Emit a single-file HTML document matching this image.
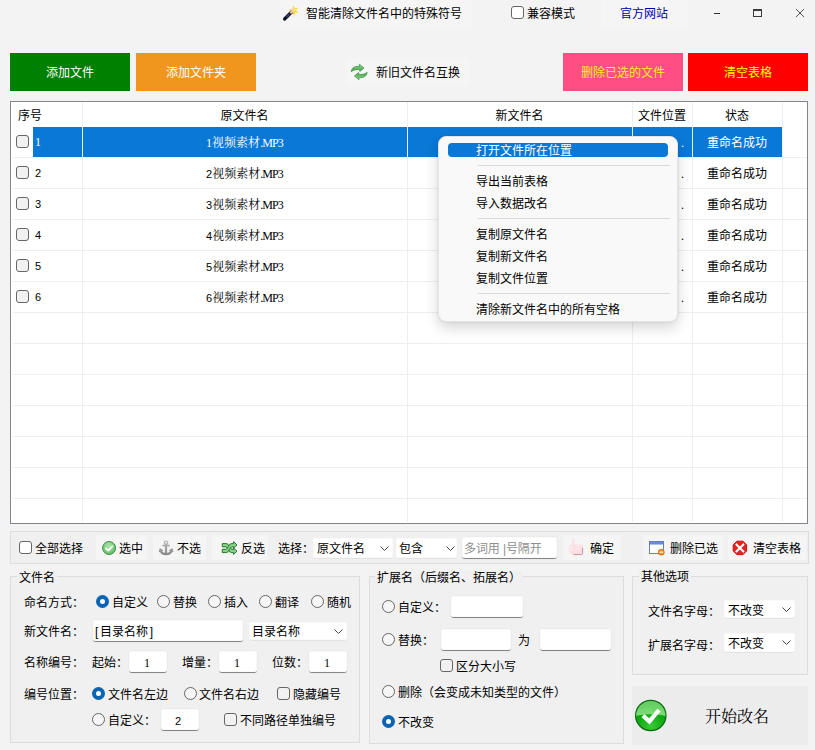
<!DOCTYPE html>
<html lang="zh-CN">
<head>
<meta charset="utf-8">
<title>文件批量改名</title>
<style>
*{box-sizing:border-box;margin:0;padding:0}
html,body{width:815px;height:750px;overflow:hidden;background:#f3f3f3}
body{position:relative;font-family:"Liberation Sans","Noto Sans CJK SC",sans-serif;font-size:12px;color:#000;line-height:1}
.a{position:absolute;white-space:nowrap}
.t{position:absolute;white-space:nowrap;height:17px;line-height:16px;padding-top:1px}
.btn{position:absolute;display:flex;align-items:center;justify-content:center;white-space:nowrap;padding-top:2px}
.lite{position:absolute;background:#f5f5f5}
.cb{position:absolute;width:13px;height:13px;border:1px solid #666;border-radius:3px;background:#f1f1f1}
.rb{position:absolute;width:13px;height:13px;border:1px solid #666;border-radius:50%;background:#f6f6f6}
.rb.on{border:4px solid #0a64b4;background:#fff}
.inp{position:absolute;background:#fff;border-bottom:1px solid #868686;border-radius:3px;box-shadow:0 0 0 1px #fafafa inset,0 0 0 1px rgba(0,0,0,0.02);line-height:21px;height:22px}
.sel{position:absolute;background:#fff;border-radius:3px;box-shadow:0 0 0 1px #fafafa inset,0 1px 0 rgba(0,0,0,0.05)}
.grp{position:absolute;border:1px solid #dcdcdc;background:#f0f0f0}
.gt{position:absolute;background:#f0f0f0;height:14px;line-height:14px;padding:0 2px;white-space:nowrap}
.serif{font-family:"Liberation Serif","Noto Serif CJK SC",serif;padding-top:0}
.dg{font-family:"Liberation Sans",sans-serif;font-size:11px}
.chev{position:absolute;width:9px;height:5px}
.vl{position:absolute;width:1px;background:#efefef;top:102px;height:420px}
.hl{position:absolute;height:1px;background:#efefef;left:13px;width:794px}
.row{position:absolute;left:0;width:815px;height:30px}
.c{position:absolute;text-align:center;height:17px;line-height:16px;white-space:nowrap;padding-top:1px}
.mi{position:absolute;left:476px;height:16px;line-height:16px;white-space:nowrap}
.sep{position:absolute;left:478px;width:192px;height:1px;background:#d9d9d9}
</style>
</head>
<body>

<!-- title bar -->
<div class="lite" style="left:280px;top:0;width:192px;height:27px"></div>
<div class="t" style="left:306px;top:5px">智能清除文件名中的特殊符号</div>
<div class="cb" style="left:511px;top:6px;background:#fff"></div>
<div class="t" style="left:527px;top:5px">兼容模式</div>
<div class="lite" style="left:601px;top:0;width:87px;height:27px"></div>
<div class="t" style="left:620px;top:5px;color:#0000a8">官方网站</div>

<!-- big buttons -->
<div class="btn" style="left:10px;top:53px;width:120px;height:38px;background:#008000;color:#fff">添加文件</div>
<div class="btn" style="left:136px;top:53px;width:120px;height:38px;background:#f0961e;color:#fff">添加文件夹</div>
<div class="lite" style="left:346px;top:59px;width:123px;height:26px"></div>
<div class="t" style="left:376px;top:64px">新旧文件名互换</div>
<div class="btn" style="left:563px;top:53px;width:120px;height:38px;background:#fe4e83;color:#ffef20">删除已选的文件</div>
<div class="btn" style="left:688px;top:53px;width:120px;height:38px;background:#ff0000;color:#ffff00">清空表格</div>

<!-- table -->
<div class="a" style="left:10px;top:101px;width:798px;height:423px;background:#fff;border:1px solid #82868c"></div>

<!-- table header -->
<div class="t" style="left:18px;top:107px">序号</div>
<div class="c" style="left:82px;width:325px;top:107px">原文件名</div>
<div class="c" style="left:407px;width:225px;top:107px">新文件名</div>
<div class="c" style="left:632px;width:60px;top:107px">文件位置</div>
<div class="c" style="left:692px;width:90px;top:107px">状态</div>
<!-- grid -->
<div class="vl" style="left:82px"></div>
<div class="vl" style="left:407px"></div>
<div class="vl" style="left:632px"></div>
<div class="vl" style="left:692px"></div>
<div class="vl" style="left:782px"></div>
<div class="hl" style="top:157px"></div>
<div class="hl" style="top:188px"></div>
<div class="hl" style="top:219px"></div>
<div class="hl" style="top:250px"></div>
<div class="hl" style="top:281px"></div>
<div class="hl" style="top:312px"></div>
<div class="hl" style="top:343px"></div>
<div class="hl" style="top:374px"></div>
<div class="hl" style="top:405px"></div>
<div class="hl" style="top:436px"></div>
<div class="hl" style="top:467px"></div>
<div class="hl" style="top:498px"></div>
<div class="a" style="left:33px;top:127px;width:749px;height:30px;background:#0a78d7"></div>
<div class="a" style="left:82px;top:127px;width:1px;height:30px;background:#e4f0fb"></div>
<div class="a" style="left:407px;top:127px;width:1px;height:30px;background:#e4f0fb"></div>
<div class="a" style="left:632px;top:127px;width:1px;height:30px;background:#e4f0fb"></div>
<div class="a" style="left:692px;top:127px;width:1px;height:30px;background:#e4f0fb"></div>
<!-- row 1 -->
<div class="cb" style="left:16px;top:135px"></div>
<div class="t serif" style="left:35px;top:134px;color:#fff;">1</div>
<div class="c serif" style="left:82px;width:325px;top:134px;color:#fff;">1视频素材<span style="letter-spacing:-0.9px">.MP3</span></div>
<div class="t serif" style="left:681px;top:135px;color:#fff;">.</div>
<div class="c" style="left:692px;width:90px;top:134px;color:#fff;">重命名成功</div>
<!-- row 2 -->
<div class="cb" style="left:16px;top:166px"></div>
<div class="t serif dg" style="left:35px;top:165px;">2</div>
<div class="c serif" style="left:82px;width:325px;top:165px;"><span class="dg">2</span>视频素材<span style="letter-spacing:-0.9px">.MP3</span></div>
<div class="t serif" style="left:681px;top:166px;">.</div>
<div class="c" style="left:692px;width:90px;top:165px;">重命名成功</div>
<!-- row 3 -->
<div class="cb" style="left:16px;top:197px"></div>
<div class="t serif dg" style="left:35px;top:196px;">3</div>
<div class="c serif" style="left:82px;width:325px;top:196px;"><span class="dg">3</span>视频素材<span style="letter-spacing:-0.9px">.MP3</span></div>
<div class="t serif" style="left:681px;top:197px;">.</div>
<div class="c" style="left:692px;width:90px;top:196px;">重命名成功</div>
<!-- row 4 -->
<div class="cb" style="left:16px;top:228px"></div>
<div class="t serif dg" style="left:35px;top:227px;">4</div>
<div class="c serif" style="left:82px;width:325px;top:227px;"><span class="dg">4</span>视频素材<span style="letter-spacing:-0.9px">.MP3</span></div>
<div class="t serif" style="left:681px;top:228px;">.</div>
<div class="c" style="left:692px;width:90px;top:227px;">重命名成功</div>
<!-- row 5 -->
<div class="cb" style="left:16px;top:259px"></div>
<div class="t serif dg" style="left:35px;top:258px;">5</div>
<div class="c serif" style="left:82px;width:325px;top:258px;"><span class="dg">5</span>视频素材<span style="letter-spacing:-0.9px">.MP3</span></div>
<div class="t serif" style="left:681px;top:259px;">.</div>
<div class="c" style="left:692px;width:90px;top:258px;">重命名成功</div>
<!-- row 6 -->
<div class="cb" style="left:16px;top:290px"></div>
<div class="t serif dg" style="left:35px;top:289px;">6</div>
<div class="c serif" style="left:82px;width:325px;top:289px;"><span class="dg">6</span>视频素材<span style="letter-spacing:-0.9px">.MP3</span></div>
<div class="t serif" style="left:681px;top:290px;">.</div>
<div class="c" style="left:692px;width:90px;top:289px;">重命名成功</div>

<!-- toolbar panel -->
<div class="a" style="left:10px;top:531px;width:799px;height:33px;border:1px solid #dddddd;background:#f0f0f0"></div>
<div class="cb" style="left:19px;top:541px;background:#fff"></div>
<div class="t" style="left:35px;top:540px">全部选择</div>
<div class="lite" style="left:96px;top:535px;width:51px;height:25px"></div>
<div class="t" style="left:119px;top:540px">选中</div>
<div class="lite" style="left:153px;top:535px;width:53px;height:25px"></div>
<div class="t" style="left:177px;top:540px">不选</div>
<div class="lite" style="left:212px;top:535px;width:56px;height:25px"></div>
<div class="t" style="left:241px;top:540px">反选</div>
<div class="t" style="left:278px;top:540px">选择：</div>
<div class="sel" style="left:313px;top:538px;width:80px;height:20px"></div>
<div class="t" style="left:317px;top:540px">原文件名</div>
<svg class="chev" style="left:380px;top:546px" viewBox="0 0 9 5"><path d="M0.5 0.5 L4.5 4.5 L8.5 0.5" fill="none" stroke="#444" stroke-width="1"/></svg>
<div class="sel" style="left:396px;top:538px;width:61px;height:20px"></div>
<div class="t" style="left:399px;top:540px">包含</div>
<svg class="chev" style="left:446px;top:546px" viewBox="0 0 9 5"><path d="M0.5 0.5 L4.5 4.5 L8.5 0.5" fill="none" stroke="#444" stroke-width="1"/></svg>
<div class="inp" style="left:462px;top:537px;width:95px;height:22px"></div>
<div class="t" style="left:464px;top:540px;color:#8e8e8e;letter-spacing:-0.1px">多词用 |号隔开</div>
<div class="lite" style="left:563px;top:535px;width:58px;height:25px"></div>
<div class="t" style="left:590px;top:540px">确定</div>
<div class="lite" style="left:643px;top:535px;width:80px;height:25px"></div>
<div class="t" style="left:670px;top:540px">删除已选</div>
<div class="lite" style="left:728px;top:535px;width:78px;height:25px"></div>
<div class="t" style="left:753px;top:540px">清空表格</div>

<!-- group: 文件名 -->
<div class="grp" style="left:10px;top:576px;width:350px;height:167px"></div>
<div class="gt" style="left:17px;top:571px">文件名</div>
<div class="t" style="left:24px;top:594px">命名方式：</div>
<div class="rb on" style="left:96px;top:595px"></div>
<div class="t" style="left:112px;top:594px">自定义</div>
<div class="rb" style="left:157px;top:595px"></div>
<div class="t" style="left:173px;top:594px">替换</div>
<div class="rb" style="left:208px;top:595px"></div>
<div class="t" style="left:224px;top:594px">插入</div>
<div class="rb" style="left:259px;top:595px"></div>
<div class="t" style="left:275px;top:594px">翻译</div>
<div class="rb" style="left:311px;top:595px"></div>
<div class="t" style="left:327px;top:594px">随机</div>

<div class="t" style="left:24px;top:623px">新文件名：</div>
<div class="inp" style="left:93px;top:620px;width:150px;height:22px"></div>
<div class="t" style="left:95px;top:623px"><span style="display:inline-block;width:5px">[</span>目录名称<span style="display:inline-block;width:5px;text-align:right">]</span></div>
<div class="sel" style="left:249px;top:622px;width:98px;height:18px"></div>
<div class="t" style="left:252px;top:623px">目录名称</div>
<svg class="chev" style="left:334px;top:629px" viewBox="0 0 9 5"><path d="M0.5 0.5 L4.5 4.5 L8.5 0.5" fill="none" stroke="#444" stroke-width="1"/></svg>
<div class="t" style="left:24px;top:654px">名称编号：</div>
<div class="t" style="left:92px;top:654px">起始：</div>
<div class="inp" style="left:129px;top:651px;width:38px;height:22px"></div>
<div class="t serif" style="left:144px;top:655px">1</div>
<div class="t" style="left:182px;top:654px">增量：</div>
<div class="inp" style="left:219px;top:651px;width:38px;height:22px"></div>
<div class="t serif" style="left:234px;top:655px">1</div>
<div class="t" style="left:272px;top:654px">位数：</div>
<div class="inp" style="left:309px;top:651px;width:38px;height:22px"></div>
<div class="t serif" style="left:324px;top:655px">1</div>

<div class="t" style="left:24px;top:686px">编号位置：</div>
<div class="rb on" style="left:92px;top:687px"></div>
<div class="t" style="left:108px;top:686px">文件名左边</div>
<div class="rb" style="left:184px;top:687px"></div>
<div class="t" style="left:199px;top:686px">文件名右边</div>
<div class="cb" style="left:277px;top:687px"></div>
<div class="t" style="left:293px;top:686px">隐藏编号</div>

<div class="rb" style="left:92px;top:713px"></div>
<div class="t" style="left:108px;top:712px">自定义：</div>
<div class="inp" style="left:161px;top:709px;width:38px;height:22px"></div>
<div class="t serif dg" style="left:175px;top:713px">2</div>
<div class="cb" style="left:224px;top:713px"></div>
<div class="t" style="left:240px;top:712px">不同路径单独编号</div>

<!-- group: 扩展名 -->
<div class="grp" style="left:369px;top:576px;width:255px;height:168px"></div>
<div class="gt" style="left:375px;top:571px">扩展名（后缀名、拓展名）</div>
<div class="rb" style="left:382px;top:600px"></div>
<div class="t" style="left:398px;top:599px">自定义：</div>
<div class="inp" style="left:451px;top:596px;width:72px;height:22px"></div>
<div class="rb" style="left:382px;top:633px"></div>
<div class="t" style="left:398px;top:632px">替换：</div>
<div class="inp" style="left:441px;top:629px;width:70px;height:22px"></div>
<div class="t" style="left:518px;top:632px">为</div>
<div class="inp" style="left:540px;top:629px;width:71px;height:22px"></div>
<div class="cb" style="left:440px;top:659px"></div>
<div class="t" style="left:456px;top:658px">区分大小写</div>
<div class="rb" style="left:382px;top:685px"></div>
<div class="t" style="left:398px;top:684px">删除（会变成未知类型的文件）</div>
<div class="rb on" style="left:382px;top:715px"></div>
<div class="t" style="left:398px;top:714px">不改变</div>

<!-- group: 其他选项 -->
<div class="grp" style="left:632px;top:576px;width:176px;height:99px"></div>
<div class="gt" style="left:639px;top:570px">其他选项</div>
<div class="t" style="left:648px;top:603px">文件名字母：</div>
<div class="sel" style="left:724px;top:600px;width:71px;height:18px"></div>
<div class="t" style="left:728px;top:602px">不改变</div>
<svg class="chev" style="left:782px;top:607px" viewBox="0 0 9 5"><path d="M0.5 0.5 L4.5 4.5 L8.5 0.5" fill="none" stroke="#444" stroke-width="1"/></svg>
<div class="t" style="left:648px;top:637px">扩展名字母：</div>
<div class="sel" style="left:724px;top:633px;width:71px;height:19px"></div>
<div class="t" style="left:728px;top:635px">不改变</div>
<svg class="chev" style="left:782px;top:640px" viewBox="0 0 9 5"><path d="M0.5 0.5 L4.5 4.5 L8.5 0.5" fill="none" stroke="#444" stroke-width="1"/></svg>
<!-- start button -->
<div class="a" style="left:632px;top:686px;width:176px;height:59px;background:#ececec"></div>
<div class="t serif" style="left:705px;top:707px;font-size:16px;height:20px;line-height:20px">开始改名</div>

<!-- icons -->
<svg class="a" style="left:280px;top:2px" width="22" height="22" viewBox="280 2 22 22">
  <polygon points="293.5,5.5 294.6,8.6 297.8,7.6 296,10.4 298.4,12.6 295.2,12.8 294.6,16 293,13.4 290,14.6 291.4,11.6 288.8,9.6 292,9.2" fill="#f5d52a" opacity="0.95"/>
  <circle cx="293.6" cy="10.8" r="2.2" fill="#fbe76a"/>
  <line x1="284.6" y1="19" x2="291.6" y2="12" stroke="#15161f" stroke-width="3.2" stroke-linecap="round"/>
  <line x1="286.4" y1="17" x2="289.4" y2="14" stroke="#3b4a86" stroke-width="1.1"/>
  <line x1="291.2" y1="12.4" x2="292.4" y2="11.2" stroke="#f3c9b8" stroke-width="2.6" stroke-linecap="round"/>
</svg>

<svg class="a" style="left:349px;top:62px" width="20" height="20" viewBox="349 62 20 20">
  <defs><linearGradient id="gA" x1="0" y1="0" x2="0" y2="1"><stop offset="0" stop-color="#8fdc8f"/><stop offset="1" stop-color="#3fa045"/></linearGradient></defs>
  <path id="arw" d="M351.2 71.6 C351.6 67.6 355.6 65.8 359.6 66.4 L359.4 64.2 L364 68 L359.8 71.4 L359.7 69.6 C356.2 69.2 353.6 70 351.2 71.6 Z" fill="url(#gA)" stroke="#3c8f41" stroke-width="0.7" stroke-linejoin="round"/>
  <use href="#arw" transform="rotate(180 359.2 72)"/>
</svg>

<svg class="a" style="left:100px;top:539px" width="18" height="18" viewBox="100 539 18 18">
  <defs><radialGradient id="gC" cx="0.45" cy="0.35" r="0.7"><stop offset="0" stop-color="#a6e8a6"/><stop offset="1" stop-color="#5cba60"/></radialGradient></defs>
  <circle cx="109.1" cy="548" r="6.5" fill="url(#gC)" stroke="#3f8f44" stroke-width="1"/>
  <path d="M106 548.4 L108.4 550.5 L112.2 546.4" fill="none" stroke="#fff" stroke-width="2" stroke-linecap="round" stroke-linejoin="round"/>
</svg>

<svg class="a" style="left:157px;top:539px" width="18" height="18" viewBox="157 539 18 18">
  <defs><linearGradient id="gAn" gradientUnits="userSpaceOnUse" x1="0" y1="541" x2="0" y2="555"><stop offset="0" stop-color="#bdbdbd"/><stop offset="1" stop-color="#878787"/></linearGradient></defs>
  <g fill="none" stroke="url(#gAn)" stroke-linecap="round">
    <circle cx="166" cy="542.8" r="1.7" stroke-width="1.4"/>
    <line x1="166" y1="544.6" x2="166" y2="554" stroke-width="2.2"/>
    <line x1="163" y1="545.6" x2="169.2" y2="545.6" stroke-width="1.6"/>
    <path d="M160.6 550.4 C161.4 553.2 164 554.2 166 554.2 C168 554.2 170.8 553.2 171.6 550.4" stroke-width="2.2"/>
    <path d="M159.4 551.6 L160.2 549 L162.6 550.4" stroke-width="1.2"/>
    <path d="M172.8 551.6 L172 549 L169.6 550.4" stroke-width="1.2"/>
  </g>
</svg>

<svg class="a" style="left:220px;top:539px" width="19" height="18" viewBox="220 539 19 18">
  <rect x="222" y="543" width="12" height="10" fill="#d9f2d9"/>
  <g fill="#86d486" stroke="#2f7434" stroke-width="1" stroke-linejoin="round">
    <path d="M222.3 543.6 L226.6 543.6 C229 543.6 229.6 549.4 232 549.4 L233.6 549.4 L233.6 548 L237 551.2 L233.6 554.4 L233.6 552.6 L231.4 552.6 C228.6 552.6 228 546.8 225.8 546.8 L222.3 546.8 Z"/>
    <path d="M222.3 552.6 L226.6 552.6 C229 552.6 229.6 546.8 232 546.8 L233.6 546.8 L233.6 548.2 L237 545 L233.6 541.6 L233.6 543.6 L231.4 543.6 C228.6 543.6 228 549.4 225.8 549.4 L222.3 549.4 Z"/>
  </g>
</svg>

<svg class="a" style="left:566px;top:537px" width="20" height="20" viewBox="566 537 20 20">
  <path d="M571.8 545 L571.8 540 C571.8 538.2 575.2 538.2 575.2 540 L575.2 545 Z" fill="#f8e6e8"/>
  <path d="M572 544.2 L581.6 544.4 C583 544.6 583 546.2 582.4 547 L582.6 553 C582.6 554.4 581.6 554.8 580.6 554.8 L573 554.8 C570.4 554.6 568.8 552 568.8 549 C568.8 546.6 570 544.8 572 544.2 Z" fill="#fbdfe3"/>
  <path d="M573.4 554.6 L581 554.6 C582.2 554.6 582.6 554 582.6 553 L582.6 547.6" fill="none" stroke="#b97880" stroke-width="1" opacity="0.75"/>
  <path d="M569.6 547.2 L572.6 547.2 M569.2 549.8 L572.4 549.8" stroke="#fff" stroke-width="0.9" opacity="0.8"/>
  <path d="M575.4 546 L580.6 546 M575.4 549 L580 549" stroke="#fdeef0" stroke-width="1.2"/>
</svg>

<svg class="a" style="left:647px;top:538px" width="20" height="20" viewBox="647 538 20 20">
  <rect x="649.5" y="541.5" width="14" height="12" fill="#fbfdff" stroke="#6b80aa" stroke-width="1"/>
  <rect x="649.5" y="541.5" width="14" height="2.6" fill="#6d93d2" stroke="#5a78b4" stroke-width="0.6"/>
  <circle cx="661.3" cy="552.3" r="3.3" fill="#d9731c"/>
  <circle cx="661.3" cy="552.3" r="2.4" fill="#ee922e"/>
  <rect x="659.4" y="551.6" width="3.8" height="1.4" rx="0.6" fill="#ffe3a8"/>
</svg>

<svg class="a" style="left:731px;top:539px" width="18" height="18" viewBox="731 539 18 18">
  <polygon points="736.8,541.2 743,541.2 746.6,544.8 746.6,551 743,554.6 736.8,554.6 733.2,551 733.2,544.8" fill="#e72222" stroke="#c31414" stroke-width="1" stroke-linejoin="round"/>
  <path d="M736.4 544.4 L743.4 551.4 M743.4 544.4 L736.4 551.4" stroke="#fff" stroke-width="2.1" stroke-linecap="round"/>
</svg>

<svg class="a" style="left:633px;top:698px" width="36" height="36" viewBox="633 698 36 36">
  <defs>
    <radialGradient id="gB" cx="0.5" cy="0.85" r="0.75">
      <stop offset="0" stop-color="#3acb3a"/><stop offset="0.55" stop-color="#12ab12"/><stop offset="1" stop-color="#0e8f12"/>
    </radialGradient>
    <linearGradient id="gG" x1="0" y1="0" x2="0" y2="1">
      <stop offset="0" stop-color="#7fe07a" stop-opacity="0.7"/><stop offset="1" stop-color="#a4f29c" stop-opacity="0.75"/>
    </linearGradient>
    <clipPath id="cB"><circle cx="650.8" cy="715.5" r="14.6"/></clipPath>
  </defs>
  <circle cx="650.8" cy="715.5" r="15.2" fill="url(#gB)" stroke="#0c6a10" stroke-width="1.2"/>
  <path d="M635 716.5 C642 713.5 659 713.5 667 716.5 L667 698 L635 698 Z" fill="url(#gG)" clip-path="url(#cB)"/>
  <path d="M643 715.6 L649.4 721.4 L659 710" fill="none" stroke="#fff" stroke-width="4.2" stroke-linejoin="miter"/>
</svg>

<!-- window controls -->
<div class="a" style="left:714px;top:13px;width:6px;height:1px;background:#333"></div>
<div class="a" style="left:753px;top:9px;width:9px;height:8px;border:1px solid #3a3a3a;border-top-width:2px"></div>
<svg class="a" style="left:795px;top:8px" width="10" height="10" viewBox="0 0 10 10"><path d="M1 1 L9 9 M9 1 L1 9" stroke="#555" stroke-width="1" fill="none"/></svg>

<!-- context menu -->
<div class="a" style="left:438px;top:136px;width:240px;height:186px;background:#f9f9f9;border:1px solid #e3e3e3;border-radius:8px;box-shadow:0 6px 14px rgba(0,0,0,0.16),0 0 3px rgba(0,0,0,0.08)"></div>
<div class="a" style="left:448px;top:143px;width:220px;height:14px;background:#0a78d7;border-radius:4px;overflow:hidden"></div>
<div class="mi" style="top:143px;color:#fff">打开文件所在位置</div>
<div class="sep" style="top:165px"></div>
<div class="mi" style="top:174px">导出当前表格</div>
<div class="mi" style="top:196px">导入数据改名</div>
<div class="sep" style="top:218px"></div>
<div class="mi" style="top:227px">复制原文件名</div>
<div class="mi" style="top:249px">复制新文件名</div>
<div class="mi" style="top:271px">复制文件位置</div>
<div class="sep" style="top:293px"></div>
<div class="mi" style="top:302px">清除新文件名中的所有空格</div>

</body>
</html>
